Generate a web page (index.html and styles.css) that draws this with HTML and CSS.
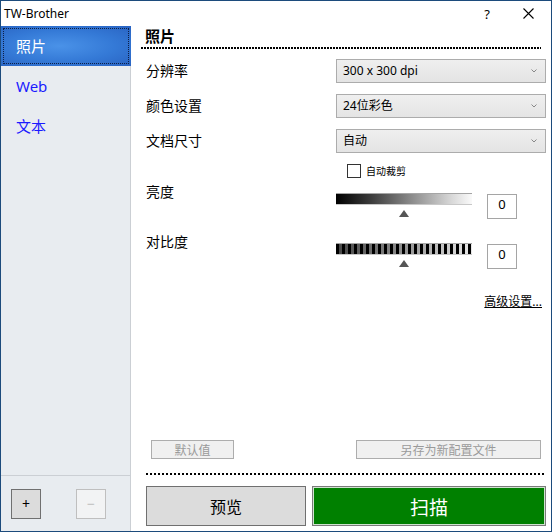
FILE: index.html
```html
<!DOCTYPE html>
<html lang="zh-CN">
  <head>
    <meta charset="UTF-8" />
    <title>TW-Brother</title>
    <link rel="stylesheet" href="styles.css">
  </head>
  <body>
    <div class="window">
      <header class="titlebar">
        <span class="title">TW-Brother</span>
        <span class="help">?</span>
        <span class="close">
          <svg width="11" height="11" viewBox="0 0 11 11">
            <path d="M0.5 0.5 L10.5 10.5 M10.5 0.5 L0.5 10.5" stroke="#000" stroke-width="1.1" fill="none" />
          </svg>
        </span>
      </header>
      <div class="content">
        <aside class="sidebar">
          <nav class="nav">
            <a class="nav-item active">照片</a>
            <a class="nav-item">Web</a>
            <a class="nav-item">文本</a>
          </nav>
          <div class="sidebar-foot">
            <button class="tool-btn">+</button>
            <button class="tool-btn" disabled>−</button>
          </div>
        </aside>
        <main class="panel">
          <h1 class="panel-title">照片</h1>
          <div class="dots top-dots"></div>

          <div class="form">
            <div class="row">
              <label>分辨率</label>
              <div class="select"><span>300 x 300 dpi</span><svg class="chev" width="6" height="4" viewBox="0 0 6 4"><path d="M0.5 0.5 L3 3 L5.5 0.5" stroke="#888" fill="none" /></svg></div>
            </div>
            <div class="row">
              <label>颜色设置</label>
              <div class="select"><span>24位彩色</span><svg class="chev" width="6" height="4" viewBox="0 0 6 4"><path d="M0.5 0.5 L3 3 L5.5 0.5" stroke="#888" fill="none" /></svg></div>
            </div>
            <div class="row">
              <label>文档尺寸</label>
              <div class="select"><span>自动</span><svg class="chev" width="6" height="4" viewBox="0 0 6 4"><path d="M0.5 0.5 L3 3 L5.5 0.5" stroke="#888" fill="none" /></svg></div>
            </div>

            <div class="check-row">
              <span class="checkbox"></span>
              <span class="check-label">自动裁剪</span>
            </div>

            <div class="slider-row">
              <label>亮度</label>
              <div class="slider">
                <div class="bar bright"></div>
                <div class="thumb"></div>
              </div>
              <div class="value">0</div>
            </div>
            <div class="slider-row">
              <label>对比度</label>
              <div class="slider">
                <div class="bar contrast"></div>
                <div class="thumb"></div>
              </div>
              <div class="value">0</div>
            </div>

            <div class="link-row"><a class="link">高级设置...</a></div>
          </div>

          <div class="panel-foot">
            <div class="profile-row">
              <button class="small-btn default-btn" disabled>默认值</button>
              <button class="small-btn save-btn" disabled>另存为新配置文件</button>
            </div>
            <div class="dots bottom-dots"></div>
            <div class="actions">
              <button class="big-btn preview">预览</button>
              <button class="big-btn scan">扫描</button>
            </div>
          </div>
        </main>
      </div>
    </div>
  </body>
</html>
```

FILE: styles.css
```css
* {
  margin: 0;
  padding: 0;
  box-sizing: border-box;
}

body {
  font-family: "Noto Sans", "Noto Sans CJK SC", sans-serif;
  color: #000;
  background: #fff;
}

.window {
  width: 552px;
  height: 532px;
  border: 1px solid #1c4b7c;
  display: flex;
  flex-direction: column;
  background: #fff;
}

/* title bar */
.titlebar {
  height: 25px;
  display: flex;
  align-items: center;
  padding-left: 3px;
  font-size: 12px;
  line-height: 16px;
}
.title {
  flex: 1;
}
.help {
  font-size: 13px;
  margin-right: 33px;
}
.close {
  display: flex;
  margin-right: 17px;
}

.content {
  flex: 1;
  display: flex;
  min-height: 0;
}

/* left list */
.sidebar {
  width: 130px;
  display: flex;
  flex-direction: column;
  background: #e8ecf0;
  border-right: 1px solid #cbcfd4;
}
.nav {
  flex: 1;
}
.nav-item {
  display: block;
  height: 40px;
  line-height: 40px;
  padding-left: 15px;
  font-size: 15px;
  color: #1a1aff;
}
.nav-item.active {
  position: relative;
  margin-right: -1px;
  color: #fff;
  background: radial-gradient(ellipse at 45% 50%, #4a92e8 0%, #3479d6 55%, #2963c2 100%);
}
.nav-item.active::after {
  content: "";
  position: absolute;
  top: 2px;
  left: 2px;
  right: 2px;
  bottom: 2px;
  border: 1px dotted #0d1f45;
}
.sidebar-foot {
  height: 56px;
  border-top: 1px solid #cbcfd4;
  display: flex;
  gap: 35px;
  padding: 13px 0 0 10px;
}
.tool-btn {
  width: 30px;
  height: 30px;
  background: #dcdcdc;
  border: 1px solid #707070;
  font-family: "Noto Sans", sans-serif;
  font-size: 14px;
  line-height: 26px;
  color: #000;
}
.tool-btn:disabled {
  background: #f2f3f4;
  border-color: #bfbfbf;
  color: #c0c0c0;
}

/* right panel */
.panel {
  flex: 1;
  display: flex;
  flex-direction: column;
  padding: 0 5px 5px 15px;
}
.panel-title {
  height: 21px;
  line-height: 21px;
  font-size: 15px;
  font-weight: bold;
  margin-left: -1px;
}
.dots {
  height: 2px;
}
.top-dots {
  margin: 0 5px 0 -5px;
  background: repeating-linear-gradient(90deg, #000 0 2px, transparent 2px 3px);
}
.bottom-dots {
  margin-top: 14px;
  background: repeating-linear-gradient(90deg, #000 0 2px, transparent 2px 4px);
}

.form {
  padding-top: 10px;
}
.row {
  display: flex;
  align-items: center;
  height: 24px;
  margin-bottom: 11px;
}
.row label,
.slider-row label {
  width: 190px;
  font-size: 14px;
  line-height: 16px;
}
.select {
  width: 210px;
  height: 24px;
  border: 1px solid #acacac;
  background: linear-gradient(#efefef, #e4e4e4);
  display: flex;
  align-items: center;
  justify-content: space-between;
  padding: 0 8px 0 6px;
  font-size: 12px;
  line-height: 16px;
}
.chev {
  display: block;
}

.check-row {
  display: flex;
  align-items: center;
  height: 14px;
  margin: 10px 0 0 201px;
}
.checkbox {
  width: 14px;
  height: 14px;
  border: 1px solid #333;
  background: #fff;
}
.check-label {
  margin-left: 5px;
  font-size: 10px;
  line-height: 12px;
}

.slider-row {
  display: flex;
  align-items: flex-start;
  height: 35px;
  margin-top: 6px;
}
.slider-row + .slider-row {
  margin-top: 15px;
}
.slider {
  width: 136px;
  padding-top: 9px;
  display: flex;
  flex-direction: column;
  align-items: center;
}
.bar {
  width: 100%;
  height: 12px;
  border-top: 1px solid #a5a5a5;
  border-bottom: 1px solid #c8c8c8;
}
.bright {
  background: linear-gradient(90deg, #000 0%, #3a3a3a 25%, #8a8a8a 55%, #d8d8d8 85%, #fafafa 100%);
}
.contrast {
  background:
    repeating-linear-gradient(90deg, #000 0 3px, transparent 3px 6px),
    linear-gradient(90deg, #444 0%, #888 45%, #e8e8e8 100%);
}
.thumb {
  width: 0;
  height: 0;
  margin-top: 5px;
  border-left: 5px solid transparent;
  border-right: 5px solid transparent;
  border-bottom: 7px solid #555;
}
.value {
  width: 30px;
  height: 25px;
  margin: 10px 0 0 15px;
  border: 1px solid #a5a5a5;
  text-align: center;
  font-size: 13px;
  line-height: 18px;
}

.link-row {
  margin-top: 20px;
  text-align: right;
  padding-right: 4px;
}
.link {
  font-size: 12px;
  line-height: 16px;
  text-decoration: underline;
  color: #000;
}

.panel-foot {
  margin-top: auto;
}
.profile-row {
  display: flex;
  justify-content: space-between;
  padding: 0 5px;
}
.small-btn {
  height: 19px;
  border: 1px solid #adadad;
  background: #f0f0f0;
  color: #9a9a9a;
  font-family: "Noto Sans CJK SC", sans-serif;
  font-size: 12px;
  line-height: 16px;
}
.default-btn {
  width: 83px;
}
.save-btn {
  width: 185px;
}
.actions {
  display: flex;
  gap: 6px;
  margin-top: 11px;
}
.big-btn {
  height: 40px;
  font-family: "Noto Sans CJK SC", sans-serif;
}
.preview {
  width: 160px;
  background: #dcdcdc;
  border: 1px solid #707070;
  font-size: 16px;
  color: #000;
}
.scan {
  flex: 1;
  background: #008000;
  border: 1px solid #7a7a7a;
  box-shadow: inset 0 0 0 1px #cfe3cf;
  font-size: 19px;
  color: #fff;
}
```
